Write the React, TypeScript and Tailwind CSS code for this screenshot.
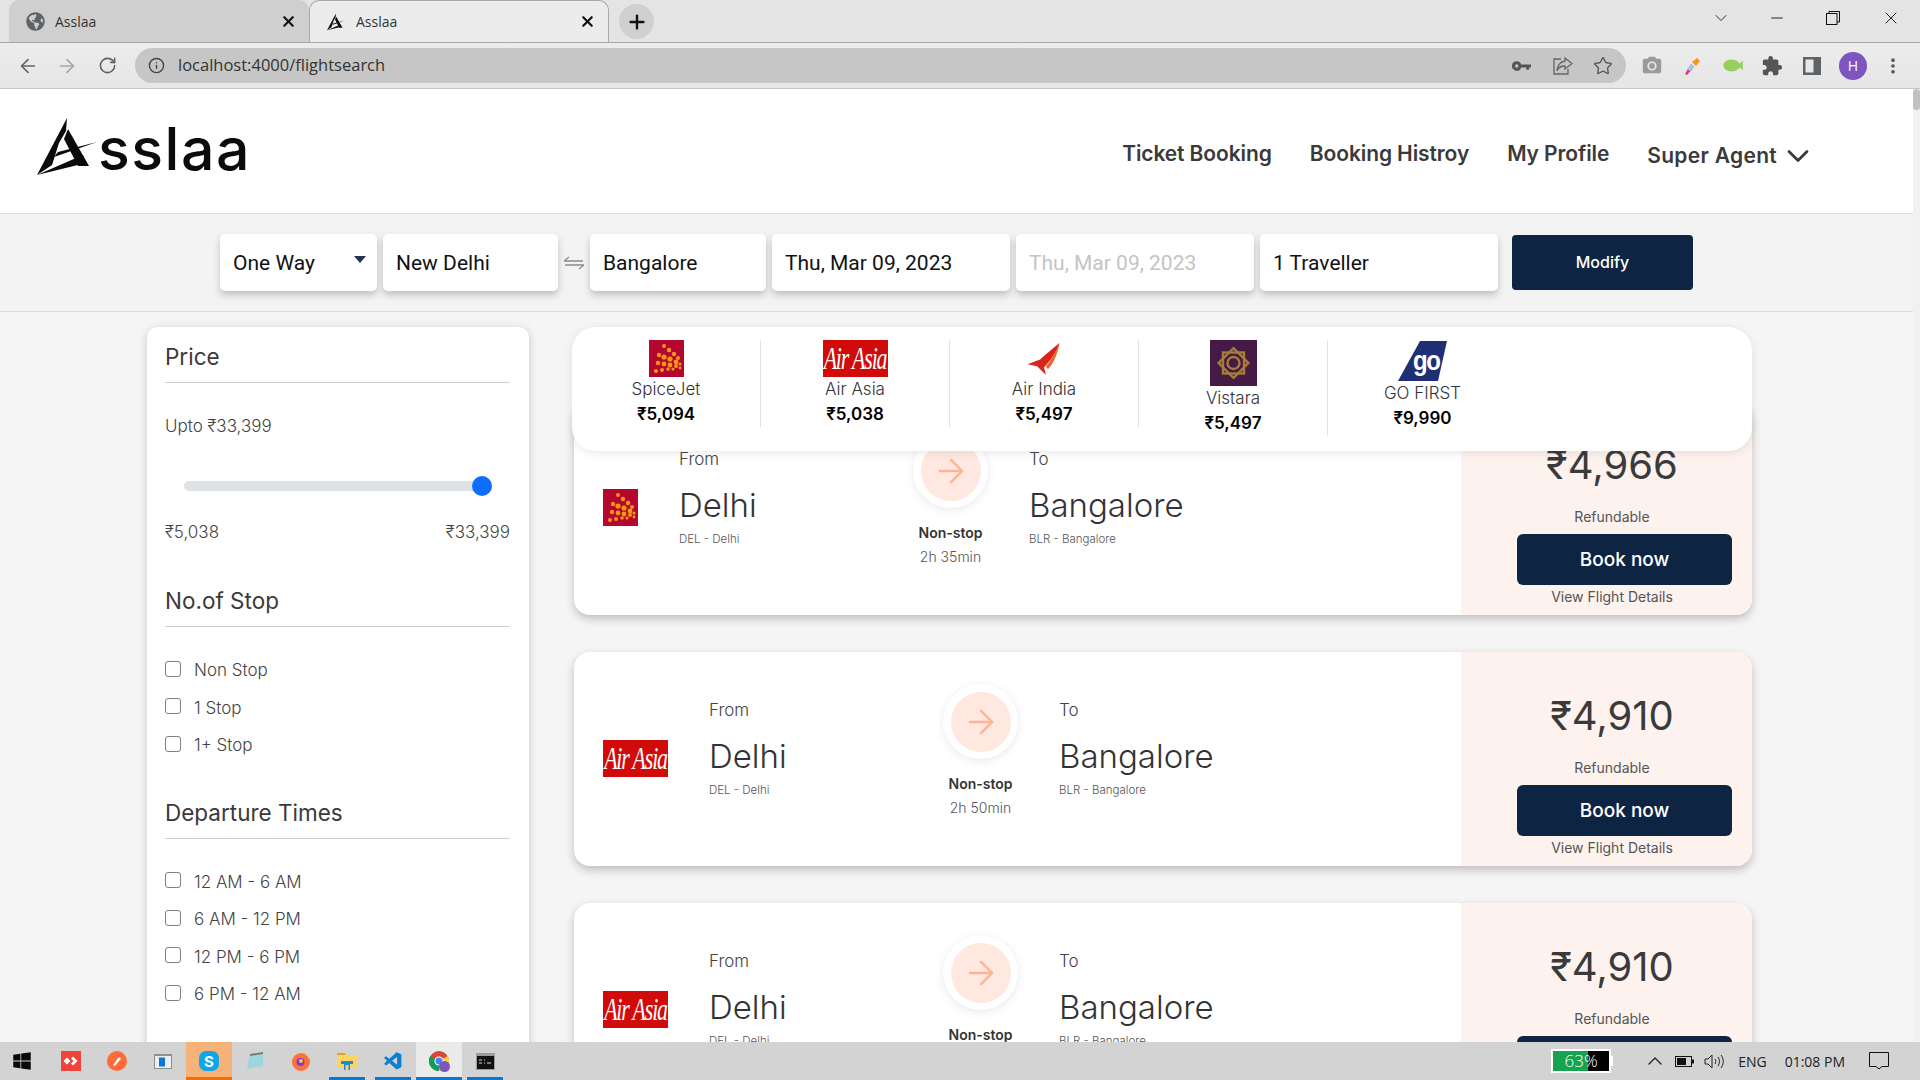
import { ArrowLeft, ArrowRight, ChevronDown, ChevronUp, EllipsisVertical, Info, Minus, Plus, RotateCw, Star, X } from "lucide-react";
import { FaGlobeAmericas, FaWindows } from "react-icons/fa";
import { MdCameraAlt, MdExtension } from "react-icons/md";
import { VscVscode } from "react-icons/vsc";

function AsslaaMark({ className }: { className?: string }) {
  return (
    <svg viewBox="0 0 64 58" className={className} fill="#0b0b0b">
      <path d="M30 0 L0 57 L15 47 L22 25 L29 13 Z" />
      <path d="M31 11 L52 48 L41 48 L27 21 Z" />
      <path d="M0 57 L46 37 L49 45 Z" />
      <path d="M17 39 L60 24 L21 34 Z" />
    </svg>
  );
}

function SpiceJetLogo() {
  const dots = [
    [15, 6, 2], [20, 10, 2.2], [25, 14, 2.2], [29, 18, 2],
    [10, 15, 2.2], [15, 17, 2.6], [21, 19, 2.6], [27, 22, 2.4], [31, 24, 1.6],
    [9, 23, 2.2], [15, 24, 2.4], [21, 25, 2.4], [27, 26, 2], [31, 28, 1.4],
    [7, 31, 2], [13, 30, 2], [19, 29, 1.8], [24, 29, 1.6],
  ];
  return (
    <svg viewBox="0 0 35 37" className="w-[35px] h-[37px] shrink-0">
      <rect width="35" height="37" fill="#b5062f" />
      {dots.map(([x, y, r], i) => (
        <circle key={i} cx={x} cy={y} r={r} fill="#f59a16" />
      ))}
    </svg>
  );
}

function AirAsiaLogo() {
  return (
    <div className="w-[65px] h-[37px] shrink-0 bg-[#d10a0a] flex items-center justify-center overflow-hidden">
      <span className="font-['Liberation_Serif',serif] italic text-white text-[22px] leading-none tracking-[-1.2px] scale-y-[1.4] whitespace-nowrap">
        Air Asia
      </span>
    </div>
  );
}

function AirIndiaLogo() {
  return (
    <svg viewBox="0 0 40 38" className="w-[40px] h-[37px]">
      <path d="M36 3 C30 8 22 14 16 20 L3 25 L13 27 L22 36 L20 28 C26 22 33 12 36 3 Z" fill="#d8241c" />
      <path d="M22 27 C27 21 32 13 36 3 C34 14 30 24 24 30 Z" fill="#f0642a" />
    </svg>
  );
}

function VistaraLogo() {
  return (
    <svg viewBox="0 0 47 46" className="w-[47px] h-[46px]">
      <rect width="47" height="46" fill="#451a45" />
      <g fill="none" stroke="#a67c3d" strokeWidth="2.4">
        <rect x="13" y="12.5" width="21" height="21" />
        <rect x="13" y="12.5" width="21" height="21" transform="rotate(45 23.5 23)" />
        <circle cx="23.5" cy="23" r="6" />
      </g>
    </svg>
  );
}

function GoFirstLogo() {
  return (
    <div className="relative w-[49px] h-[41px] overflow-hidden">
      <svg viewBox="0 0 49 41" className="w-[49px] h-[41px]">
        <path d="M22 1 L49 1 L40 41 L0 41 Z" fill="#1f2f75" />
      </svg>
      <span className="absolute left-[15px] top-[8px] font-['Liberation_Sans',sans-serif] font-bold text-white text-[24px] leading-[26px] tracking-[-1.5px] scale-y-[1.15]">
        go
      </span>
    </div>
  );
}

const airlines = [
  { name: "SpiceJet", price: "₹5,094", logo: <SpiceJetLogo /> },
  { name: "Air Asia", price: "₹5,038", logo: <AirAsiaLogo /> },
  { name: "Air India", price: "₹5,497", logo: <AirIndiaLogo /> },
  { name: "Vistara", price: "₹5,497", logo: <VistaraLogo /> },
  { name: "GO FIRST", price: "₹9,990", logo: <GoFirstLogo /> },
];

function AirlineBar() {
  return (
    <div className="relative z-10 h-[124px] -mb-[50px] bg-white rounded-[24px] shadow-[0_2px_10px_rgba(90,70,80,0.12)] flex items-start pt-[13px]">
      {airlines.map((a, i) => (
        <div key={a.name} className={`w-[189px] flex flex-col items-center ${i < 4 ? "border-r border-[#e2e2e2]" : ""}`}>
          <div className="flex justify-center">{a.logo}</div>
          <div className="text-[17px] leading-[24px] text-[#333] font-light">{a.name}</div>
          <div className="text-[17px] leading-[24px] mt-[1px] pb-[1px] text-black font-semibold">{a.price}</div>
        </div>
      ))}
    </div>
  );
}

function FlightCard({ logo, time, price }: { logo: React.ReactNode; time: string; price: string }) {
  return (
    <div className="h-[214px] shrink-0 flex bg-white rounded-[16px] overflow-hidden shadow-[0_4px_9px_rgba(90,70,80,0.32)]">
      <div className="flex-1 flex items-start pl-[29px]">
        <div className="mt-[88px] mr-[41px]">{logo}</div>
        <div className="w-[234px] pt-[46px]">
          <div className="text-[17px] leading-[24px] text-[#444] font-light">From</div>
          <div className="mt-[14px] text-[33px] leading-[40px] text-[#333] font-light">Delhi</div>
          <div className="mt-[6px] text-[11.5px] leading-[16px] text-[#555] font-light">DEL - Delhi</div>
        </div>
        <div className="w-[75px] pt-[32px] flex flex-col items-center">
          <div className="w-[75px] h-[75px] rounded-full bg-white flex items-center justify-center shadow-[0_2px_8px_rgba(90,70,80,0.12)]">
            <div className="w-[60px] h-[60px] rounded-full bg-[#fee8df] flex items-center justify-center">
              <ArrowRight size={38} strokeWidth={1.5} color="#ffb294" />
            </div>
          </div>
          <div className="mt-[15px] text-[14px] leading-[20px] text-[#333] font-semibold whitespace-nowrap">Non-stop</div>
          <div className="mt-[4px] text-[14px] leading-[20px] text-[#555] font-light whitespace-nowrap">{time}</div>
        </div>
        <div className="ml-[41px] pt-[46px]">
          <div className="text-[17px] leading-[24px] text-[#444] font-light">To</div>
          <div className="mt-[14px] text-[33px] leading-[40px] text-[#333] font-light">Bangalore</div>
          <div className="mt-[6px] text-[11.5px] leading-[16px] text-[#555] font-light">BLR - Bangalore</div>
        </div>
      </div>
      <div className="w-[291px] shrink-0 bg-[#fdf2ee] pl-[11px] pt-[40px] flex flex-col items-center">
        <div className="text-[40px] leading-[48px] text-[#3a3a3a]">{price}</div>
        <div className="mt-[17px] text-[14px] leading-[22px] text-[#555]">Refundable</div>
        <button className="mt-[6px] self-end mr-[20px] w-[215px] h-[51px] pt-[1px] shrink-0 rounded-[6px] bg-[#0d2543] text-white text-[19px] font-medium">
          Book now
        </button>
        <div className="mt-[1px] text-[14px] leading-[22px] text-[#555]">View Flight Details</div>
      </div>
    </div>
  );
}

function FilterTitle({ title, className }: { title: string; className?: string }) {
  return (
    <div className={`border-b border-[#cfcfcf] ${className ?? ""}`}>
      <div className="text-[22.5px] leading-[30px] text-[#3a3a3a]">{title}</div>
    </div>
  );
}

function CheckRow({ label }: { label: string }) {
  return (
    <label className="h-[37.5px] flex items-center gap-[13px] text-[17px] text-[#444] font-light">
      <input type="checkbox" className="appearance-none w-4 h-4 -mt-[4px] rounded-[3px] border border-[#808080] bg-white" />
      <span>{label}</span>
    </label>
  );
}

function Sidebar() {
  return (
    <div className="w-[382px] h-[760px] shrink-0 bg-white rounded-[10px] pl-[18px] pr-[19px] pt-[15px] shadow-[0_2px_8px_rgba(90,70,80,0.28)]">
      <FilterTitle title="Price" className="pb-[10px]" />
      <div className="mt-[32px] text-[17px] leading-[22px] text-[#444] font-light">Upto ₹33,399</div>
      <div className="mt-[44px] ml-[19px] mr-[18px] relative h-[10px] rounded-full bg-[#dee2e6]">
        <div className="absolute right-0 -top-[5px] w-5 h-5 rounded-full bg-[#0d6efd]" />
      </div>
      <div className="mt-[30px] flex justify-between text-[17px] leading-[22px] text-[#444] font-light">
        <span>₹5,038</span>
        <span>₹33,399</span>
      </div>
      <FilterTitle title="No.of Stop" className="mt-[43px] pb-[10px]" />
      <div className="mt-[25px]">
        <CheckRow label="Non Stop" />
        <CheckRow label="1 Stop" />
        <CheckRow label="1+ Stop" />
      </div>
      <FilterTitle title="Departure Times" className="mt-[33px] pb-[10px]" />
      <div className="mt-[25px]">
        <CheckRow label="12 AM - 6 AM" />
        <CheckRow label="6 AM - 12 PM" />
        <CheckRow label="12 PM - 6 PM" />
        <CheckRow label="6 PM - 12 AM" />
      </div>
    </div>
  );
}

function SearchField({ children, width, muted }: { children: React.ReactNode; width: string; muted?: boolean }) {
  return (
    <div className={`${width} h-[57px] shrink-0 flex items-center pl-[13px] pt-[3px] bg-white rounded-[5px] font-['Roboto',sans-serif] text-[21px] shadow-[0_4px_7px_rgba(90,70,80,0.3)] ${muted ? "text-[#c4c4c4]" : "text-[#111]"}`}>
      {children}
    </div>
  );
}

function SearchBar() {
  return (
    <div className="h-[99px] shrink-0 flex items-center pl-[220px] gap-[6px] bg-[#f3f3f3] border-y border-[#dcdcdc]">
      <div className="relative">
        <SearchField width="w-[157px]">One Way</SearchField>
        <svg viewBox="0 0 12 7" className="absolute right-[11px] top-[22px] w-[12px] h-[7px]">
          <path d="M0 0 H12 L6 7 Z" fill="#24344d" />
        </svg>
      </div>
      <SearchField width="w-[175px]">New Delhi</SearchField>
      <svg viewBox="0 0 20 14" className="w-[20px] h-[14px] shrink-0" fill="none" stroke="#8c8c8c" strokeWidth="1.3">
        <path d="M0 5 H19 M0 5 L5 1" />
        <path d="M20 9 H1 M20 9 L15 13" />
      </svg>
      <SearchField width="w-[176px]">Bangalore</SearchField>
      <SearchField width="w-[238px]">Thu, Mar 09, 2023</SearchField>
      <SearchField width="w-[238px]" muted>Thu, Mar 09, 2023</SearchField>
      <SearchField width="w-[238px]">1 Traveller</SearchField>
      <button className="ml-[8px] w-[181px] h-[55px] rounded-[4px] bg-[#0d2543] text-white text-[16px] font-medium -mt-[1px]">
        Modify
      </button>
    </div>
  );
}

function Header() {
  return (
    <div className="h-[124px] shrink-0 bg-white relative flex items-center">
      <div className="ml-[37px] flex items-end h-[58px] -mt-[8px]">
        <AsslaaMark className="w-[64px] h-[58px]" />
        <span className="-ml-[3px] text-[59px] leading-[58px] font-medium text-[#0b0b0b] -mb-[2px] tracking-[1.5px]">sslaa</span>
      </div>
      <nav className="ml-auto mr-[97px] mt-[6px] flex items-center gap-[38px] text-[21px] font-semibold text-[#3a3a3a]">
        <span className="tracking-[-0.1px]">Ticket Booking</span>
        <span className="tracking-[-0.1px]">Booking Histroy</span>
        <span className="tracking-[-0.1px]">My Profile</span>
        <span className="flex items-center gap-[3px] tracking-[0.3px] mt-[3px]">
          Super Agent
          <ChevronDown size={36} strokeWidth={1.8} />
        </span>
      </nav>
    </div>
  );
}

function ChromeTab({ active, icon }: { active?: boolean; icon: React.ReactNode }) {
  return (
    <div className={`w-[300px] h-[42px] flex items-center pl-[16px] pr-[12px] rounded-t-[10px] font-['Open_Sans',sans-serif] text-[14px] text-[#333] ${active ? "bg-[#ececec] border border-b-0 border-[#a8a8a8]" : "bg-[#cfcfcf]"}`}>
      <div className="w-[20px] flex justify-center">{icon}</div>
      <span className="ml-[10px]">Asslaa</span>
      <X size={17} strokeWidth={3} className="ml-auto text-[#111]" />
    </div>
  );
}

function TabStrip() {
  return (
    <div className="h-[43px] shrink-0 flex items-start pl-[9px] bg-[#e4e4e4] border-b border-[#a8a8a8]">
      <ChromeTab icon={<FaGlobeAmericas size={19} color="#5f6368" />} />
      <ChromeTab active icon={<AsslaaMark className="w-[19px] h-[20px]" />} />
      <div className="ml-[10px] mt-[4px] w-[35px] h-[35px] rounded-full bg-[#d0d0d0] flex items-center justify-center">
        <Plus size={22} strokeWidth={2.6} color="#111" />
      </div>
      <div className="ml-auto flex items-center h-[36px]">
        <ChevronDown size={20} strokeWidth={1.2} color="#333" className="mr-[37px]" />
        <Minus size={18} strokeWidth={1.2} color="#111" className="mr-[40px]" />
        <svg viewBox="0 0 14 14" className="w-[14px] h-[14px] mr-[41px]" fill="none" stroke="#111" strokeWidth="1">
          <rect x="0.5" y="2.5" width="10.5" height="11" />
          <path d="M3 2.5 V0.5 H13.5 V11 H11" />
        </svg>
        <X size={20} strokeWidth={1.1} color="#111" className="mr-[19px]" />
      </div>
    </div>
  );
}

function Toolbar() {
  return (
    <div className="h-[46px] shrink-0 flex items-center bg-gradient-to-b from-[#ececec] to-[#e6e6e6] border-b border-[#c6c6c6]">
      <ArrowLeft size={22} strokeWidth={1.8} color="#5f6368" className="ml-[17px]" />
      <ArrowRight size={22} strokeWidth={1.8} color="#a6a6a6" className="ml-[17px]" />
      <RotateCw size={19} strokeWidth={2} color="#5f6368" className="ml-[20px]" />
      <div className="ml-[18px] w-[1491px] h-[35px] flex items-center rounded-full bg-[#c6c6c6]">
        <Info size={17} strokeWidth={2} color="#444" className="ml-[13px]" />
        <span className="ml-[13px] font-['Open_Sans',sans-serif] text-[16.5px] text-[#333]">localhost:4000/flightsearch</span>
        <svg viewBox="0 0 20 10" className="ml-auto w-[19px] h-[10px]" fill="#555">
          <path fillRule="evenodd" d="M5 0 a5 5 0 0 1 4.7 3.3 H20 V6.5 H18 V9 H15 V6.5 H9.7 A5 5 0 1 1 5 0 Z M5 3.2 a1.8 1.8 0 1 0 0.01 0 Z" />
        </svg>
        <svg viewBox="0 0 20 20" className="ml-[22px] w-[20px] h-[20px]" fill="none" stroke="#666" strokeWidth="1.3">
          <path d="M8 3 H1 V18 H15 V13" />
          <path d="M12 2 L19 7.5 L12 13 V10 C8 10 5 12 4 15 C4 10 7 5.5 12 5 Z" />
        </svg>
        <Star size={20} strokeWidth={1.6} color="#555" className="ml-[20px] mr-[13px]" />
      </div>
      <MdCameraAlt size={22} color="#9a9a9a" className="ml-[15px]" />
      <svg viewBox="0 0 20 20" className="ml-[19px] w-[20px] h-[20px]">
        <path d="M3 18 L9 8 L12 11 L5 19 Z" fill="#ef2b7c" />
        <path d="M5 13 L9 8 L12 11 L8 15 Z" fill="#8fd0f0" />
        <path d="M10 6 L14 10 L18 5 L15 2 Z" fill="#f7941d" />
      </svg>
      <svg viewBox="0 0 22 14" className="ml-[21px] w-[21px] h-[13px]" fill="#96cf5d">
        <ellipse cx="9" cy="7" rx="9" ry="6.5" />
        <path d="M15 7 L21 2 V12 Z" />
      </svg>
      <MdExtension size={22} color="#555" className="ml-[17px]" />
      <svg viewBox="0 0 18 18" className="ml-[20px] w-[18px] h-[18px]">
        <rect x="0" y="0" width="18" height="18" fill="#5f6368" />
        <rect x="2.5" y="2.5" width="8" height="13" fill="#e8e8e8" />
      </svg>
      <div className="ml-[18px] w-[28px] h-[28px] rounded-full bg-[#7c55bf] flex items-center justify-center text-white text-[14px] font-['Open_Sans',sans-serif]">
        H
      </div>
      <EllipsisVertical size={20} strokeWidth={2.4} color="#555" className="ml-[16px]" />
    </div>
  );
}

function TaskSlot({ children, className, bar }: { children: React.ReactNode; className?: string; bar?: string }) {
  return (
    <div className={`relative w-[46px] h-full flex items-center justify-center ${className ?? ""}`}>
      {children}
      {bar && <div className={`absolute bottom-0 h-[3px] ${bar}`} />}
    </div>
  );
}

function Taskbar() {
  return (
    <div className="h-[38px] shrink-0 flex items-center bg-[#d3d3d3] relative z-20">
      <div className="w-[48px] flex justify-center pr-[4px]">
        <FaWindows size={20} color="#0a0a0a" />
      </div>
      <TaskSlot>
        <svg viewBox="0 0 20 20" className="w-[20px] h-[20px]">
          <rect width="20" height="20" fill="#ef443b" />
          <path d="M6 6.5 L9.5 10 L6 13.5 L2.5 10 Z M12 5.5 L16.5 10 L12 14.5 L10 12.5 L12.5 10 L10 7.5 Z" fill="#fff" />
        </svg>
      </TaskSlot>
      <TaskSlot>
        <svg viewBox="0 0 20 20" className="w-[20px] h-[20px]">
          <circle cx="10" cy="10" r="10" fill="#ff6c37" />
          <path d="M6 14 L12 6 L14 7.5 L8 15 Z" fill="#fff" />
        </svg>
      </TaskSlot>
      <TaskSlot>
        <svg viewBox="0 0 18 15" className="w-[18px] h-[15px]">
          <rect width="18" height="15" fill="#8f8f8f" />
          <rect x="1" y="2" width="16" height="12" fill="#eeeeee" />
          <rect x="5" y="3.5" width="6" height="9" fill="#0a78d7" />
        </svg>
      </TaskSlot>
      <TaskSlot className="bg-[#f7b27a]" bar="left-0 right-0 bg-[#f76b00]">
        <div className="w-[20px] h-[20px] rounded-[7px] bg-[#0ea5e9] flex items-center justify-center text-white font-bold text-[15px] leading-none">
          S
        </div>
      </TaskSlot>
      <TaskSlot>
        <svg viewBox="0 0 20 20" className="w-[20px] h-[20px]">
          <path d="M5 3 L18 1 L18 15 L2 18 Z" fill="#9fd5dc" />
          <path d="M5 3 L18 1 L18 3 L5 5 Z" fill="#7c7c7c" />
        </svg>
      </TaskSlot>
      <TaskSlot>
        <svg viewBox="0 0 20 20" className="w-[20px] h-[20px]">
          <circle cx="10" cy="11" r="9" fill="#ff7139" />
          <path d="M12 1 C15 3 19 6 19 11 C19 7 15 5 12 1 Z" fill="#ffbd30" />
          <circle cx="9.5" cy="11" r="4" fill="#7b3fd0" />
          <circle cx="10" cy="10" r="2" fill="#ffbd4f" />
        </svg>
      </TaskSlot>
      <TaskSlot bar="left-[5px] right-[5px] bg-[#0a78d7]">
        <svg viewBox="0 0 20 18" className="w-[20px] h-[18px]">
          <path d="M0 1 H8 L10 3 H20 V16 H0 Z" fill="#fcd462" />
          <path d="M0 1 H8 L9 3 H0 Z" fill="#e2a325" />
          <path d="M4 9 H16 V12 H13 V18 H7 V12 H4 Z" fill="#1c8ad8" />
          <rect x="8.5" y="13" width="3" height="5" fill="#fcd462" />
        </svg>
      </TaskSlot>
      <TaskSlot bar="left-[5px] right-[5px] bg-[#0a78d7]">
        <VscVscode size={21} color="#0a7fd4" />
      </TaskSlot>
      <TaskSlot className="bg-[#eaeaea]" bar="left-0 right-0 bg-[#0a78d7]">
        <div className="relative w-[20px] h-[20px]">
          <svg viewBox="0 0 20 20" className="w-[20px] h-[20px]">
            <circle cx="10" cy="10" r="10" fill="#db4437" />
            <path d="M10 10 L1.3 5 A10 10 0 0 0 10 20 Z" fill="#0f9d58" />
            <path d="M10 10 L18.7 5 A10 10 0 0 1 10 20 Z" fill="#ffcd40" />
            <circle cx="10" cy="10" r="4.6" fill="#fff" />
            <circle cx="10" cy="10" r="3.6" fill="#4285f4" />
          </svg>
          <div className="absolute -right-[1px] -bottom-[1px] w-[11px] h-[11px] rounded-full bg-[#7c55bf]" />
        </div>
      </TaskSlot>
      <TaskSlot bar="left-[5px] right-[5px] bg-[#0a78d7]">
        <svg viewBox="0 0 19 17" className="w-[19px] h-[17px]">
          <rect width="19" height="17" fill="#9b9b9b" />
          <rect x="1" y="3" width="17" height="13" fill="#111" />
          <path d="M3 7 H6 M3 10 H6 M8 7 H9 M8 10 H9 M11 10 H15" stroke="#ddd" strokeWidth="1" />
        </svg>
      </TaskSlot>

      <div className="ml-auto flex items-center font-['Open_Sans',sans-serif] text-[#222]">
        <div className="flex items-center mr-[30px]">
          <div className="relative w-[60px] h-[24px] border-2 border-white bg-black overflow-hidden flex items-center justify-center text-white text-[17px] font-light">
            <div className="absolute left-0 top-0 bottom-0 w-[35px] bg-[#16a34f]" />
            <span className="relative">63%</span>
          </div>
          <div className="w-[2px] h-[10px] bg-white" />
        </div>
        <ChevronUp size={24} strokeWidth={1.3} color="#222" />
        <svg viewBox="0 0 19 11" className="ml-[8px] w-[19px] h-[11px]">
          <rect x="0.5" y="0.5" width="16" height="10" fill="none" stroke="#111" />
          <rect x="2" y="2" width="9" height="7" fill="#111" />
          <rect x="17" y="3.5" width="2" height="4" fill="#111" />
        </svg>
        <svg viewBox="0 0 21 15" className="ml-[10px] w-[21px] h-[15px]" fill="none" stroke="#222" strokeWidth="1">
          <path d="M1 5 H4 L8 1 V14 L4 10 H1 Z" />
          <path d="M11 5 C12 6.5 12 8.5 11 10 M14 3 C16 6 16 9 14 12 M17 1 C20 5 20 10 17 14" />
        </svg>
        <span className="ml-[13px] text-[14px]">ENG</span>
        <span className="ml-[18px] text-[14px]">01:08 PM</span>
        <svg viewBox="0 0 20 18" className="ml-[24px] mr-[31px] w-[20px] h-[18px]" fill="none" stroke="#111" strokeWidth="1">
          <path d="M0.5 0.5 H19.5 V14.5 H13 L10 17 L7 14.5 H0.5 Z" />
        </svg>
      </div>
    </div>
  );
}

export default function App() {
  return (
    <div className="w-[1920px] h-screen flex flex-col overflow-hidden bg-[#f5f5f5] font-['Inter',sans-serif]">
      <TabStrip />
      <Toolbar />
      <div className="flex-1 min-h-0 flex">
        <div className="flex-1 min-w-0 flex flex-col">
          <Header />
          <SearchBar />
          <div className="flex-1 min-h-0 flex items-start overflow-hidden pl-[147px] pt-[15px]">
            <Sidebar />
            <div className="ml-[43px] w-[1180px] shrink-0 flex flex-col">
              <AirlineBar />
              <div className="ml-[2px] flex flex-col gap-[37px]">
                <FlightCard logo={<SpiceJetLogo />} time="2h 35min" price="₹4,966" />
                <FlightCard logo={<AirAsiaLogo />} time="2h 50min" price="₹4,910" />
                <FlightCard logo={<AirAsiaLogo />} time="2h 50min" price="₹4,910" />
              </div>
            </div>
          </div>
        </div>
        <div className="w-[7px] shrink-0 bg-[#f1f1f1]">
          <div className="h-[21px] rounded-full bg-[#c1c1c1]" />
        </div>
      </div>
      <Taskbar />
    </div>
  );
}
